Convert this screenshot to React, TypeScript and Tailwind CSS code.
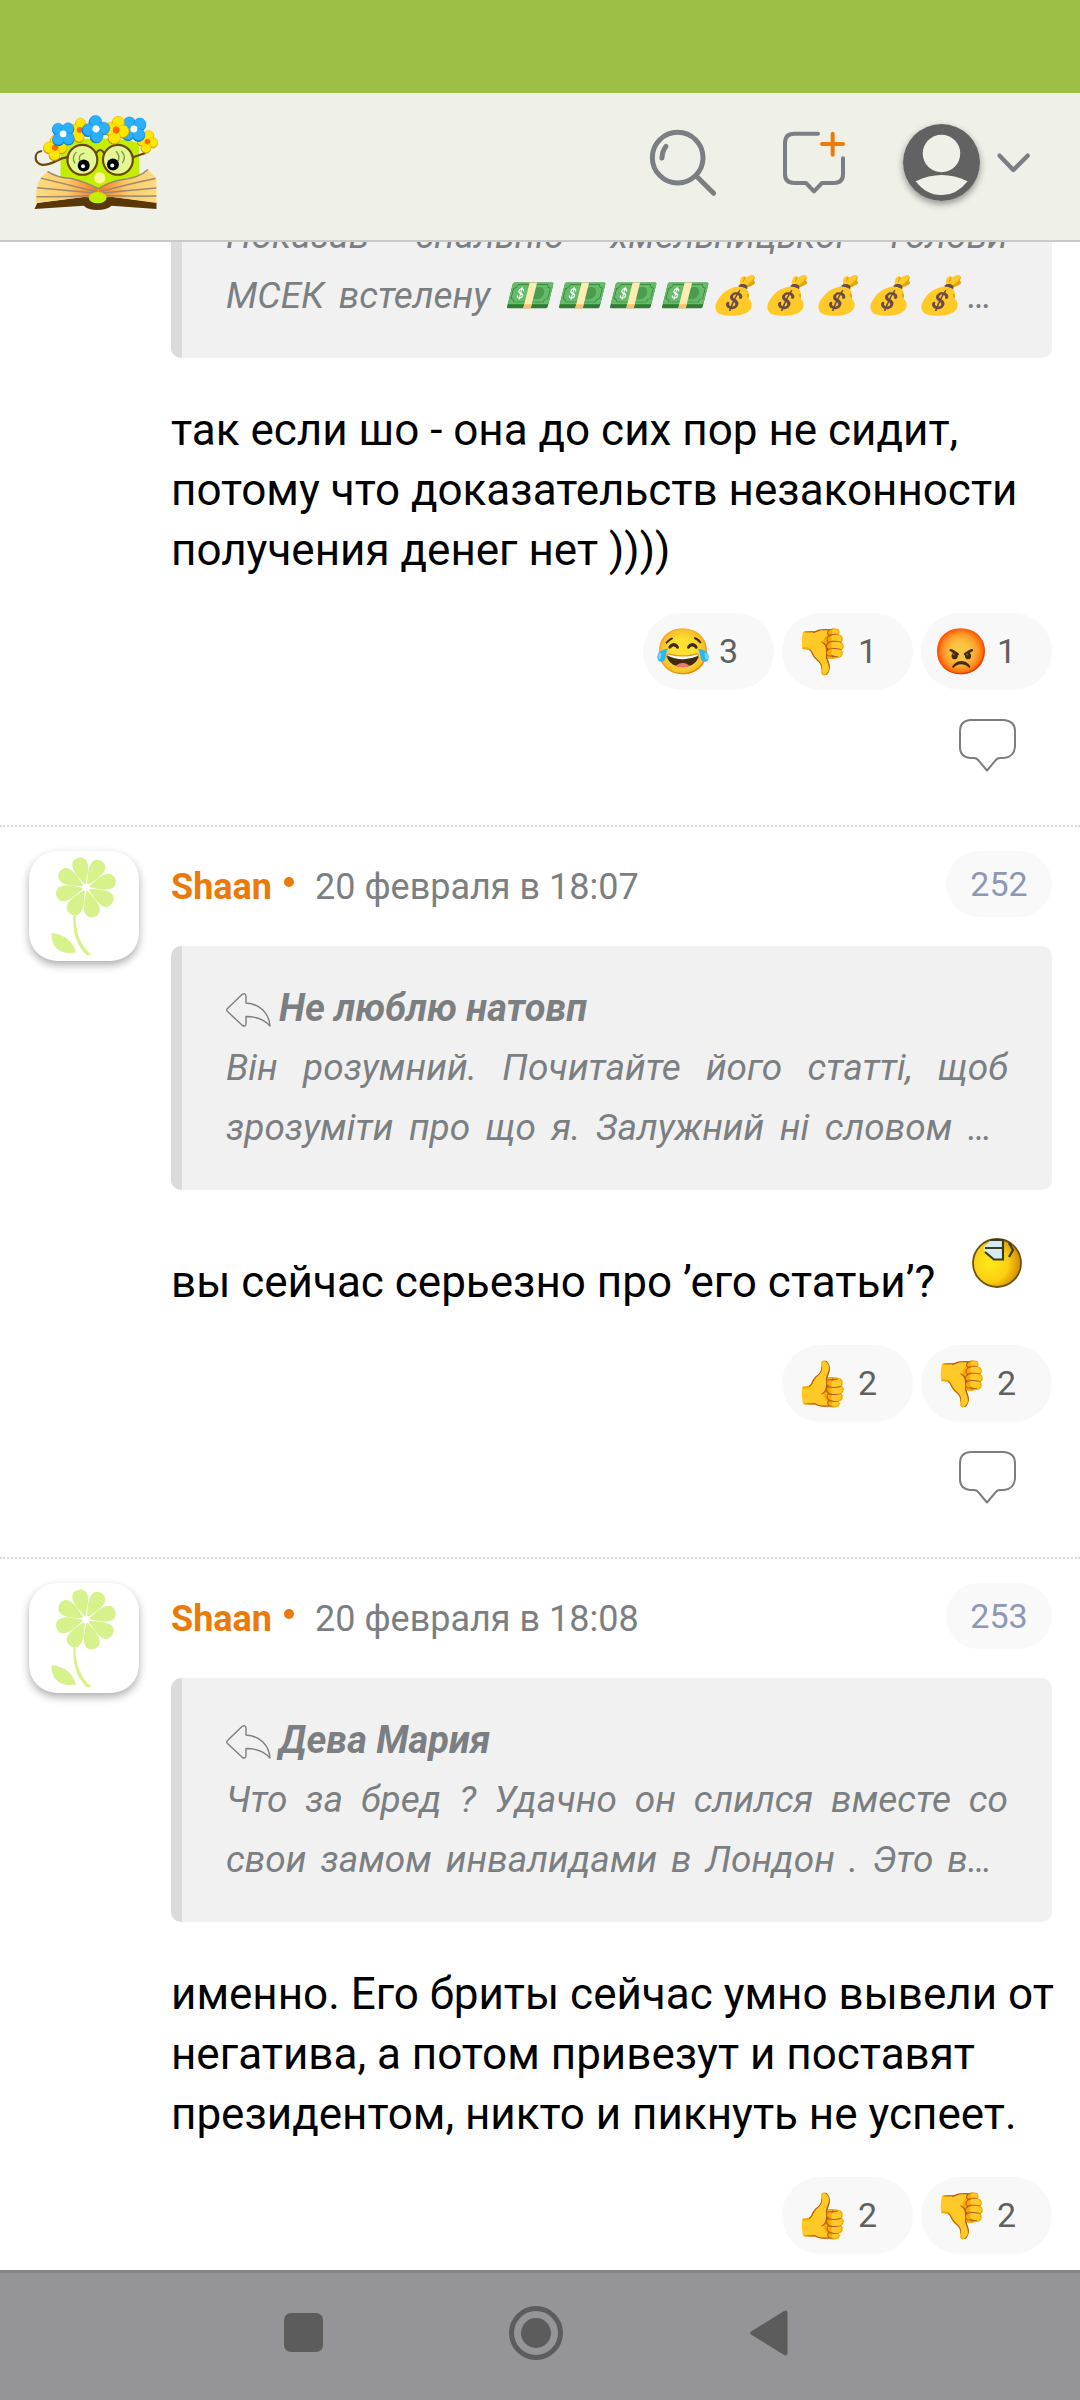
import type { ReactNode } from "react";

type Reaction = { emoji: string; label: string; count: number };

const LAUGH: Omit<Reaction, "count"> = { emoji: "😂", label: "Смешно" };
const DOWN: Omit<Reaction, "count"> = { emoji: "👎", label: "Не нравится" };
const UP: Omit<Reaction, "count"> = { emoji: "👍", label: "Нравится" };
const ANGRY: Omit<Reaction, "count"> = { emoji: "😡", label: "Злюсь" };

const PETALS = [-15, 30, 75, 120, 165, 210, 255, 300];

function Blossom({ x, y, s = 1, r = 0, blue = false }: { x: number; y: number; s?: number; r?: number; blue?: boolean }) {
  const spots = blue ? [[-15, -15], [15, -16], [-14, 16], [16, 14]] : [[-2, -22], [19, -3], [2, 22], [-19, 3]];
  return (
    <g transform={`translate(${x} ${y}) scale(${s}) rotate(${r})`}>
      {spots.map(([cx, cy]) => (
        <circle key={`s${cx}`} cx={cx} cy={cy + 3} r="18" fill={blue ? "#1577c9" : "#b98a00"} />
      ))}
      {spots.map(([cx, cy]) => (
        <circle key={`p${cx}`} cx={cx} cy={cy} r="17.5" fill={blue ? "#2ab0ff" : "#ffe600"} stroke={blue ? "#1688dd" : "#e3b400"} strokeWidth="1.5" />
      ))}
      <circle r="13" fill={blue ? "#2ab0ff" : "#ffe600"} />
      <circle r="10" fill={blue ? "#ffffff" : "#ff6a00"} />
    </g>
  );
}

function Logo() {
  return (
    <svg viewBox="100 98 375 292" className="h-[97px] w-[125px]" aria-hidden="true">
      <defs>
        <linearGradient id="pageL" x1="0" x2="1">
          <stop offset="0" stopColor="#fbdc80" />
          <stop offset="0.5" stopColor="#fdca6e" />
          <stop offset="1" stopColor="#f5761d" />
        </linearGradient>
        <linearGradient id="pageR" x1="1" x2="0">
          <stop offset="0" stopColor="#fbdc80" />
          <stop offset="0.5" stopColor="#fdca6e" />
          <stop offset="1" stopColor="#f5761d" />
        </linearGradient>
      </defs>
      <path d="M183 190Q200 172 300 172T418 190L420 290L296 335L182 295Z" fill="#c4ee00" />
      <path d="M104 384L112 366L265 346H325L471 364V384L336 374Q320 387 293 387Q266 387 252 374Z" fill="#5a3708" />
      <path d="M143 271Q170 288 215 292Q262 304 296 323L290 350L250 348L108 366Q106 312 123 290Z" fill="url(#pageL)" />
      <path d="M445 265Q420 290 365 296Q325 304 296 323L300 350L340 348L471 366V292Z" fill="url(#pageR)" />
      <g fill="none" stroke="#9a8a72" strokeWidth="4.5">
        <path d="M143 271Q170 290 215 292Q262 304 296 323Q325 304 365 296Q420 290 445 265" />
        <path d="M123 291Q200 310 288 331M112 320Q200 328 284 336M110 347Q190 348 270 344" />
        <path d="M468 292Q390 308 304 331M471 321Q390 328 310 336M471 345Q400 346 322 344" />
      </g>
      <ellipse cx="294" cy="350" rx="27" ry="17" fill="#c4ee00" />
      <circle cx="300" cy="290" r="17" fill="#fff69a" />
      <g stroke="#6b4708" fill="none" strokeWidth="6.5" strokeLinecap="round">
        <circle cx="248" cy="236" r="45" fill="#e3f795" />
        <circle cx="355" cy="236" r="45" fill="#e3f795" />
        <path d="M290 215Q301 198 313 215M203 228C170 232 160 252 128 251C100 248 102 212 124 210M400 228L436 216" />
      </g>
      <g fill="none" stroke="#7f9a3a" strokeWidth="4">
        <path d="M230 212Q214 230 226 247M254 216Q232 220 242 242M349 210Q362 222 356 240M366 210Q382 228 368 246" />
      </g>
      <circle cx="252" cy="253" r="18" fill="#000" />
      <circle cx="340" cy="250" r="18" fill="#000" />
      <circle cx="250" cy="255" r="6" fill="#fff" />
      <circle cx="338" cy="253" r="6" fill="#fff" />
      <Blossom x={166} y={199} s={0.95} r={10} />
      <Blossom x={240} y={146} s={0.9} r={12} />
      <Blossom x={444} y={181} s={0.85} r={18} />
      <Blossom x={190} y={158} blue />
      <Blossom x={403} y={143} blue r={8} s={1.05} />
      <Blossom x={350} y={146} s={1.05} r={20} />
      <Blossom x={289} y={143} blue s={1.05} r={42} />
    </svg>
  );
}

function Flower() {
  return (
    <svg viewBox="0 0 110 110" className="size-full" aria-hidden="true" fill="#d7f28c">
      <g transform="translate(57 36.5)">
        {PETALS.map((a) => (
          <path key={a} transform={`rotate(${a})`} d="M-1-4C-4-11-8-17-7.700-23.500C-7.500-33 7.500-33 7.700-23.500C8-17 4-11 1-4Z" />
        ))}
      </g>
      <path d="M44.500 62H46.500C46 82 52 95 62.500 104H57.500C47 94 43 80 44.500 62Z" />
      <path d="M22.500 82C22 97 31 104 47 101.500C45 92 36 83 22.500 82Z" />
    </svg>
  );
}

function ReplyArrow() {
  return (
    <svg viewBox="0 0 45 34" className="mt-1 h-[34px] w-[45px]" fill="none" stroke="#7c7f82" strokeWidth="1.400" strokeLinejoin="round" aria-hidden="true">
      <path d="M1.500 15.500L16 1.500Q19.500-.5 20 3V10C34 11 43 20 44 33C38 26 30 23.500 20 23.500V31Q19.500 34 16.500 32.500L1.500 18.500Q0 17 1.500 15.500Z" />
    </svg>
  );
}

function CommentButton() {
  return (
    <button type="button" aria-label="Ответить" className="mt-7 mr-9 block cursor-pointer">
      <svg viewBox="0 0 58 54" className="h-[54px] w-[58px]" fill="none" stroke="#7c7f82" strokeWidth="2" strokeLinejoin="round" aria-hidden="true">
        <path d="M12 2H46Q57 3 57 13V29Q56 39 46 40H42Q39 40 37 43L29 52.500L21 43Q19 40 16 40H12Q2 39 2 29V13Q2 3 12 2Z" />
      </svg>
    </button>
  );
}

function SickSmiley() {
  return (
    <svg viewBox="0 0 50 50" className="mt-1.5 size-[50px]" role="img" aria-label="Смайлик">
      <defs>
        <radialGradient id="ball" cx="0.35" cy="0.5" r="0.7">
          <stop offset="0" stopColor="#ffe81c" />
          <stop offset="0.55" stopColor="#fad010" />
          <stop offset="1" stopColor="#c87a00" />
        </radialGradient>
      </defs>
      <circle cx="25" cy="25" r="24" fill="url(#ball)" stroke="#6b5210" strokeWidth="1.800" />
      <path d="M19 2H31V21H22L13 14L12 9Z" fill="#d4ebf2" />
      <path d="M18 2H31V21.500H22L13 14M13 10H31M37 5L41 12L37 19" fill="none" stroke="#3c3a28" strokeWidth="2.200" />
    </svg>
  );
}

function Quote({ author, children }: { author?: string; children: ReactNode }) {
  return (
    <blockquote className={`rounded-[10px] border-l-[11px] border-[#dbdbdb] bg-[#f1f1f1] px-11 pb-8 text-[37px] leading-[60px] text-[#7c7f82] italic ${author ? "pt-8" : ""}`}>
      {author && (
        <div className="flex items-center gap-2 text-[38px] font-bold">
          <ReplyArrow />
          <cite>{author}</cite>
        </div>
      )}
      {children}
    </blockquote>
  );
}

function QuoteLine({ children, last = false }: { children: ReactNode; last?: boolean }) {
  return <p className={`text-justify whitespace-nowrap [text-align-last:justify] ${last ? "pr-4" : ""}`}>{children}</p>;
}

function Reactions({ items }: { items: Reaction[] }) {
  return (
    <div className="mt-[33px] flex justify-end gap-2">
      {items.map((r) => (
        <button key={r.label} type="button" aria-label={`${r.label}: ${r.count}`} className="flex h-[77px] w-[131px] cursor-pointer items-center gap-2 rounded-full bg-[#f8f8f8] pl-3 text-[34px] text-[#606060]">
          <span className="w-14 text-[45px] leading-none">{r.emoji}</span>
          {r.count}
        </button>
      ))}
    </div>
  );
}

function Post({ author, date, number, children }: { author: string; date: string; number: number; children: ReactNode }) {
  return (
    <article className="flex gap-8 border-t-2 border-dotted border-[#d9d9d9] pt-6 pr-7 pl-[29px]">
      <a href="#profile" aria-label={author} className="size-[110px] shrink-0 overflow-hidden rounded-[28px] bg-white shadow-[0_4px_8px_rgba(0,0,0,0.32)]">
        <Flower />
      </a>
      <div className="min-w-0 flex-1">
        <header className="flex h-[66px] items-center justify-between">
          <div className="flex items-center pt-1.5 text-[36px] text-[#7c7f82]">
            <a href="#profile" className="font-bold text-[#eb7a0b]">{author}</a>
            <span className="mr-[21px] mb-2.5 ml-3 size-[10px] rounded-full bg-[#eb7a0b]" />
            <time>{date}</time>
          </div>
          <a href="#post" className="flex h-[66px] w-[106px] items-center justify-center rounded-full bg-[#f9f9f9] text-[34px] text-[#8e98b2]">{number}</a>
        </header>
        <div className="mt-[29px]">{children}</div>
      </div>
    </article>
  );
}

export default function App() {
  return (
    <div className="flex h-screen flex-col overflow-hidden bg-white font-['Roboto','Noto_Color_Emoji',sans-serif] text-black">
      <div className="h-[93px] shrink-0 bg-[#9dbf45]" />
      <header className="flex h-[149px] shrink-0 items-center border-b-2 border-[#c9cac6] bg-[#eff0e8] pr-12 pb-2 pl-[33px]">
        <a href="#home" aria-label="Главная"><Logo /></a>
        <div className="ml-auto flex items-center">
          <button type="button" aria-label="Поиск" className="cursor-pointer">
            <svg viewBox="145 118 210 210" className="size-[70px]" fill="none" stroke="#7b7e82" strokeWidth="15" strokeLinecap="round" aria-hidden="true">
              <circle cx="234" cy="207" r="76" />
              <path d="M292 264L342 314M187 208Q188 186 199 173" />
            </svg>
          </button>
          <button type="button" aria-label="Новая тема" className="ml-[62px] cursor-pointer">
            <svg viewBox="540 118 204 210" className="h-[70px] w-[68px]" fill="none" stroke="#7b7e82" strokeWidth="12" strokeLinecap="round" strokeLinejoin="round" aria-hidden="true">
              <path d="M654 135H583Q555 135 555 163V257Q555 283 583 283H618L642 308L666 283H702Q729 283 729 257V209" />
              <path d="M666 166H729M698 135V198" stroke="#ee7a08" />
            </svg>
          </button>
          <button type="button" aria-label="Профиль" className="ml-[55px] flex cursor-pointer items-center gap-4">
            <span className="size-[77px] rounded-full shadow-[0_3px_7px_rgba(0,0,0,0.4)]">
              <svg viewBox="909 102 230 230" className="size-full" aria-hidden="true">
                <circle cx="1024" cy="217" r="115" fill="#626262" />
                <circle cx="1024" cy="190" r="56" fill="#eff0e8" />
                <path d="M947 273Q1024 236 1102 273Q1069 315 1024 314Q979 315 947 273Z" fill="#eff0e8" />
              </svg>
            </span>
            <svg viewBox="1188 166 108 102" className="h-[34px] w-9" fill="none" stroke="#7b7e82" strokeWidth="13" strokeLinecap="round" strokeLinejoin="round" aria-hidden="true">
              <path d="M1199 195L1240 238L1283 195" />
            </svg>
          </button>
        </div>
      </header>

      <main className="min-h-0 flex-1 overflow-hidden">
        <article className="-mt-9 pr-7 pb-[53px] pl-[171px]">
          <Quote>
            <QuoteLine>Показав спальню хмельницької голови</QuoteLine>
            <QuoteLine last>МСЕК встелену 💵💵💵💵💰💰💰💰💰…</QuoteLine>
          </Quote>
          <p className="mt-[42px] text-[44px] leading-[60px]">так если шо - она до сих пор не сидит, потому что доказательств незаконности получения денег нет ))))</p>
          <Reactions items={[{ ...LAUGH, count: 3 }, { ...DOWN, count: 1 }, { ...ANGRY, count: 1 }]} />
          <div className="flex justify-end"><CommentButton /></div>
        </article>

        <Post author="Shaan" date="20 февраля в 18:07" number={252}>
          <Quote author="Не люблю натовп">
            <QuoteLine>Він розумний. Почитайте його статті, щоб</QuoteLine>
            <QuoteLine last>зрозуміти про що я. Залужний ні словом …</QuoteLine>
          </Quote>
          <div className="mt-[42px] flex h-20 items-start justify-between pr-[30px]">
            <p className="self-end text-[44px] leading-[60px]">вы сейчас серьезно про ’его статьи’?</p>
            <SickSmiley />
          </div>
          <Reactions items={[{ ...UP, count: 2 }, { ...DOWN, count: 2 }]} />
          <div className="flex justify-end pb-[53px]"><CommentButton /></div>
        </Post>

        <Post author="Shaan" date="20 февраля в 18:08" number={253}>
          <Quote author="Дева Мария">
            <QuoteLine>Что за бред ? Удачно он слился вместе со</QuoteLine>
            <QuoteLine last>свои замом инвалидами в Лондон . Это в…</QuoteLine>
          </Quote>
          <p className="-mr-4 mt-[42px] text-[44px] leading-[60px]">именно. Его бриты сейчас умно вывели от негатива, а потом привезут и поставят президентом, никто и пикнуть не успеет.</p>
          <Reactions items={[{ ...UP, count: 2 }, { ...DOWN, count: 2 }]} />
        </Post>
      </main>

      <nav className="flex h-[130px] shrink-0 items-center justify-center border-t-[3px] border-[#88878c] bg-[#959499] pr-2 pb-2 text-[#5c5c5c]">
        <button type="button" aria-label="Последние приложения" className="flex w-[233px] justify-center">
          <span className="size-[39px] rounded-[7px] bg-current" />
        </button>
        <button type="button" aria-label="Домой" className="flex w-[233px] justify-center">
          <span className="flex size-[54px] items-center justify-center rounded-full border-[5px] border-current">
            <span className="size-[30px] rounded-full bg-current" />
          </span>
        </button>
        <button type="button" aria-label="Назад" className="flex w-[233px] justify-center">
          <svg viewBox="0 0 38 46" className="h-[46px] w-[38px]" fill="currentColor" aria-hidden="true">
            <path d="M1 21.500L34.500.8Q37.500-.5 37.500 3V43Q37.500 46.500 34.500 45.200L1 24.500Q-.5 23 1 21.500Z" />
          </svg>
        </button>
      </nav>
    </div>
  );
}
